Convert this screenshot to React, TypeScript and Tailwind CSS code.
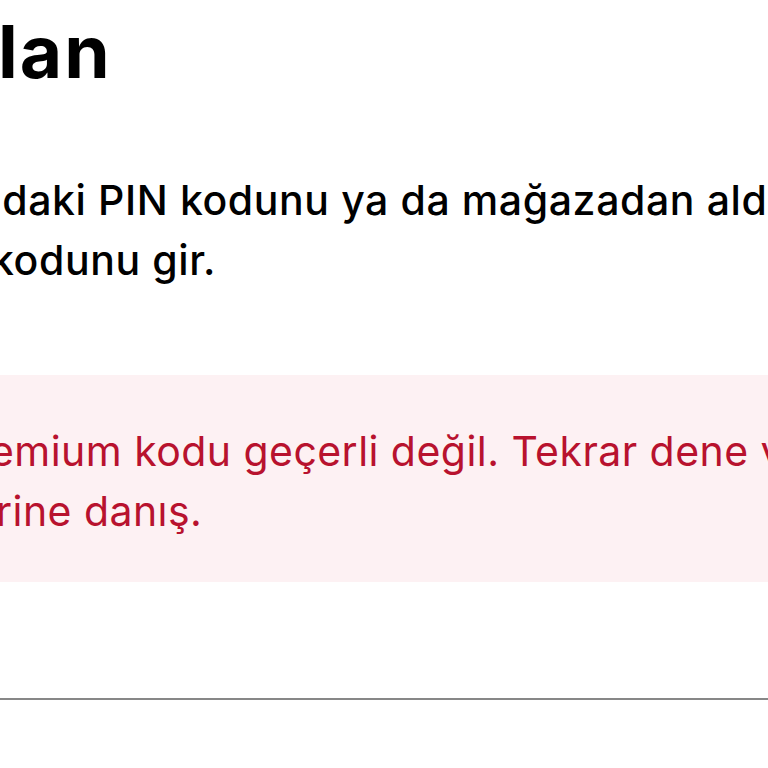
export default function App() {
  return (
    <div className="relative h-[768px] w-[768px] overflow-hidden bg-white font-['Inter','Liberation_Sans',sans-serif] text-black">
      <h1 className="-ml-[2px] pt-[15px] text-[73px] font-bold leading-none tracking-[2px] whitespace-nowrap">
        lan
      </h1>

      <p className="mt-[82px] text-[41px] font-medium leading-[60px] tracking-[0.6px] whitespace-nowrap">
        <span className="-ml-[23px] block">ndaki PIN kodunu ya da mağazadan aldığın Premium</span>
        <span className="-ml-[9px] block">kodunu gir.</span>
      </p>

      <div className="mt-[85px] bg-[#fdf1f3] pt-[46px] pb-[41px] text-[41px] leading-[60px] tracking-[0.45px] text-[#b8122e] whitespace-nowrap">
        <span className="-ml-[10px] block">emium kodu geçerli değil. Tekrar dene veya</span>
        <span className="-ml-[4px] block">rine danış.</span>
      </div>

      <div className="mt-[116px] h-[2px] w-full bg-[#878787]" />
    </div>
  );
}
